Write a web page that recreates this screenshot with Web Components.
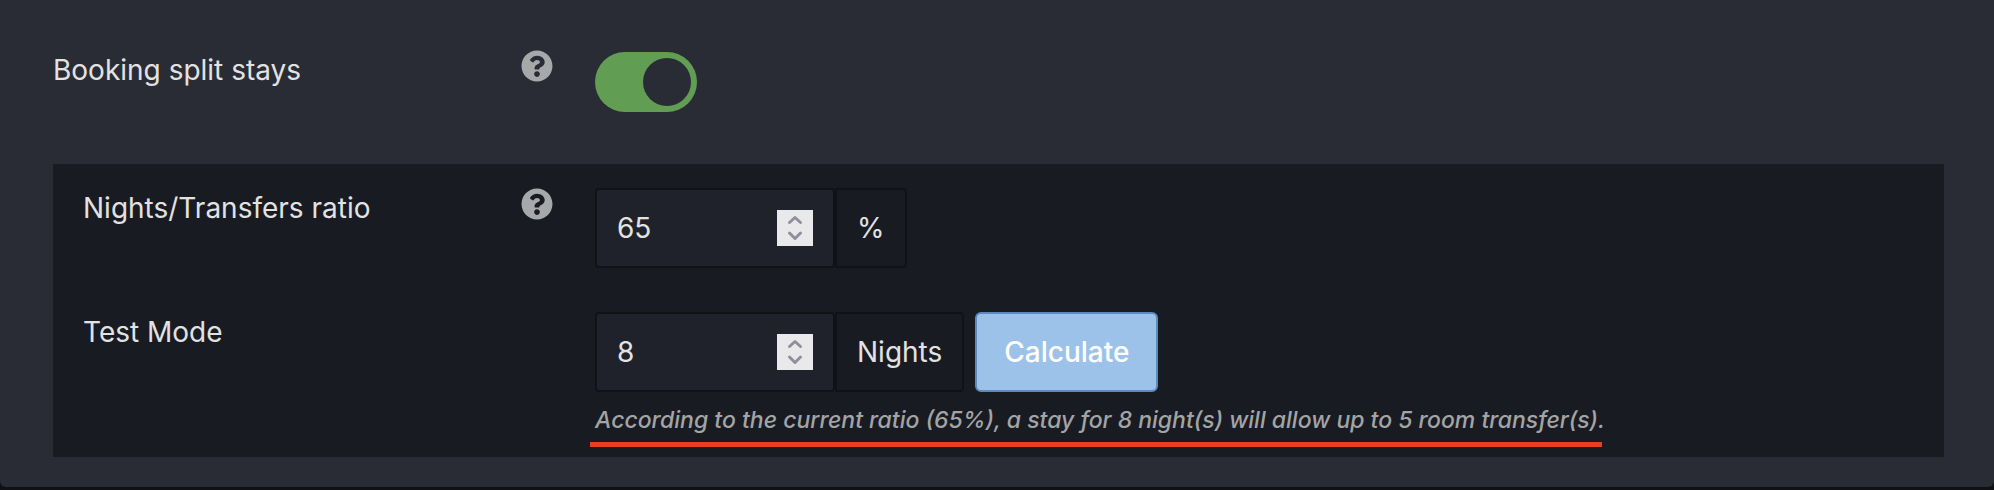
<!DOCTYPE html>
<html lang="en">
<head>
<meta charset="utf-8">
<title>Booking settings</title>
<style>
  html { background: #0f1114; }
  body {
    margin: 0;
    font: 400 28px/40px Inter, "Liberation Sans", sans-serif;
    color: #e2e2e2;
  }
</style>
</head>
<body>
<settings-panel>
  <setting-row>
    <label slot="label" for="split-stays">Booking split stays</label>
    <help-tip slot="help" label="About booking split stays"></help-tip>
    <toggle-switch><input type="checkbox" id="split-stays" checked></toggle-switch>
  </setting-row>
  <settings-group>
    <setting-row nested>
      <label slot="label" for="ratio">Nights/Transfers ratio</label>
      <help-tip slot="help" label="About the nights/transfers ratio"></help-tip>
      <number-field><input type="number" id="ratio" value="65" min="0" max="100"><span slot="unit">%</span></number-field>
    </setting-row>
    <setting-row nested>
      <label slot="label" for="nights">Test Mode</label>
      <number-field><input type="number" id="nights" value="8" min="1"><span slot="unit">Nights</span></number-field>
      <action-button>Calculate</action-button>
      <result-hint slot="hint">According to the current ratio (65%), a stay for 8 night(s) will allow up to 5 room transfer(s).</result-hint>
    </setting-row>
  </settings-group>
</settings-panel>

<script>
const define = (name, html, setup) => {
  const template = document.createElement('template');
  template.innerHTML = html;
  customElements.define(name, class extends HTMLElement {
    constructor() {
      super();
      this.attachShadow({ mode: 'open' }).append(template.content.cloneNode(true));
    }
    connectedCallback() { if (setup) setup(this, this.shadowRoot); }
  });
};

define('settings-panel', `
  <style>
    :host { display: flex; flex-direction: column; gap: 52px; padding: 50px 50px 30px 53px;
      background: #292c34; border-radius: 0 0 6px 6px; }
  </style>
  <slot></slot>`);

define('settings-group', `
  <style>
    :host { display: flex; flex-direction: column; gap: 44px; padding: 24px 30px 10px; background: #191b23; }
  </style>
  <slot></slot>`);

define('setting-row', `
  <style>
    :host { display: grid; grid-template-columns: 468px 32px minmax(0, 1fr); align-items: start; }
    :host([nested]) { grid-template-columns: 438px 32px minmax(0, 1fr); }
    .control { margin-left: 42px; }
    .line { display: flex; flex-wrap: wrap; gap: 11px; }
    .help { display: flex; }
  </style>
  <slot name="label"></slot>
  <div class="help"><slot name="help"></slot></div>
  <div class="control">
    <div class="line"><slot></slot></div>
    <slot name="hint"></slot>
  </div>`);

define('help-tip', `
  <style>
    :host { display: block; }
    button { display: block; width: 32px; height: 32px; padding: 0; border: 0; background: none; color: #a7a8aa; cursor: help; }
    svg { display: block; }
  </style>
  <button type="button">
    <svg width="32" height="32" viewBox="0 0 512 512" fill="currentColor" aria-hidden="true">
      <path d="M504 256c0 136.997-111.043 248-248 248S8 392.997 8 256C8 119.083 119.043 8 256 8s248 111.083 248 248zM262.655 90c-54.497 0-89.255 22.957-116.549 63.758-3.536 5.286-2.353 12.415 2.715 16.258l34.699 26.31c5.205 3.947 12.621 3.008 16.665-2.122 17.864-22.658 30.113-35.797 57.303-35.797 20.429 0 45.698 13.148 45.698 32.958 0 14.976-12.363 22.667-32.534 33.976C247.128 238.528 216 254.941 216 296v4c0 6.627 5.373 12 12 12h56c6.627 0 12-5.373 12-12v-1.333c0-28.462 83.186-29.647 83.186-106.667 0-58.002-60.165-102-116.531-102zM256 338c-25.365 0-46 20.635-46 46 0 25.364 20.635 46 46 46s46-20.636 46-46c0-25.365-20.635-46-46-46z"/>
    </svg>
  </button>`, (host, root) => root.querySelector('button').setAttribute('aria-label', host.getAttribute('label')));

define('toggle-switch', `
  <style>
    :host { display: flex; box-sizing: border-box; position: relative; width: 102px; height: 60px; margin-top: 2px;
      padding: 6px; border-radius: 30px; background: #5b5e66; }
    :host([on]) { background: #619e53; justify-content: flex-end; }
    .knob { width: 48px; height: 48px; border-radius: 50%; background: #292c34; }
    ::slotted(input) { position: absolute; inset: 0; width: 100%; height: 100%; margin: 0; opacity: 0; cursor: pointer; }
  </style>
  <span class="knob"></span><slot></slot>`, host => {
    const input = host.querySelector('input');
    const sync = () => host.toggleAttribute('on', input.checked);
    input.addEventListener('change', sync);
    sync();
  });

define('number-field', `
  <style>
    :host { display: flex; height: 80px; }
    .box, .unit { box-sizing: border-box; display: flex; align-items: center; border: 2px solid #111216; }
    .box { width: 240px; padding: 0 20px; border-radius: 4px; background: #20222b; }
    .unit { padding: 0 20px; border-radius: 0 4px 4px 0; }
    ::slotted(input) { flex: 1; min-width: 0; height: 40px; padding: 0; border: 0; outline: 0; background: none;
      font: inherit; color: inherit; appearance: textfield; }
    .stepper { display: flex; flex-direction: column; width: 36px; height: 36px; background: #e9e9ec; color: #8f909c; }
    button { flex: 1; display: flex; align-items: center; justify-content: center; padding: 0; border: 0; background: none; color: inherit; }
    svg { display: block; fill: none; stroke: currentColor; stroke-width: 3; stroke-linecap: round; stroke-linejoin: round; }
  </style>
  <div class="box">
    <slot></slot>
    <div class="stepper">
      <button type="button" class="up" tabindex="-1" aria-label="Increase"><svg width="36" height="18" viewBox="0 0 36 18"><path d="M12.500 12.500 18 7.500 23.500 12.500"/></svg></button>
      <button type="button" class="down" tabindex="-1" aria-label="Decrease"><svg width="36" height="18" viewBox="0 0 36 18"><path d="M12.500 5 18 10.500 23.500 5"/></svg></button>
    </div>
  </div>
  <div class="unit"><slot name="unit"></slot></div>`, (host, root) => {
    const input = host.querySelector('input');
    root.querySelector('.up').onclick = () => input.stepUp();
    root.querySelector('.down').onclick = () => input.stepDown();
  });

define('action-button', `
  <style>
    :host { display: block; }
    button { height: 80px; padding: 0 27px; border: 2px solid #5b8abf; border-radius: 6px; background: #9dc2ea;
      font: inherit; font-weight: 500; color: #fff; cursor: pointer; }
  </style>
  <button type="button"><slot></slot></button>`);

/* Result line, marked with a red underline that starts just left of the text. */
define('result-hint', `
  <style>
    :host { display: block; margin-top: 12px; padding-bottom: 11px; font-size: 23px; line-height: 32px; font-style: italic; font-weight: 500; color: #a3a4a5; }
    .mark { position: relative; display: inline-block; vertical-align: top; }
    .mark::after { content: ""; position: absolute; left: -5px; right: 3px; top: 38px; height: 5px; background: #ea3e24; }
  </style>
  <span class="mark"><slot></slot></span>`);
</script>
</body>
</html>
